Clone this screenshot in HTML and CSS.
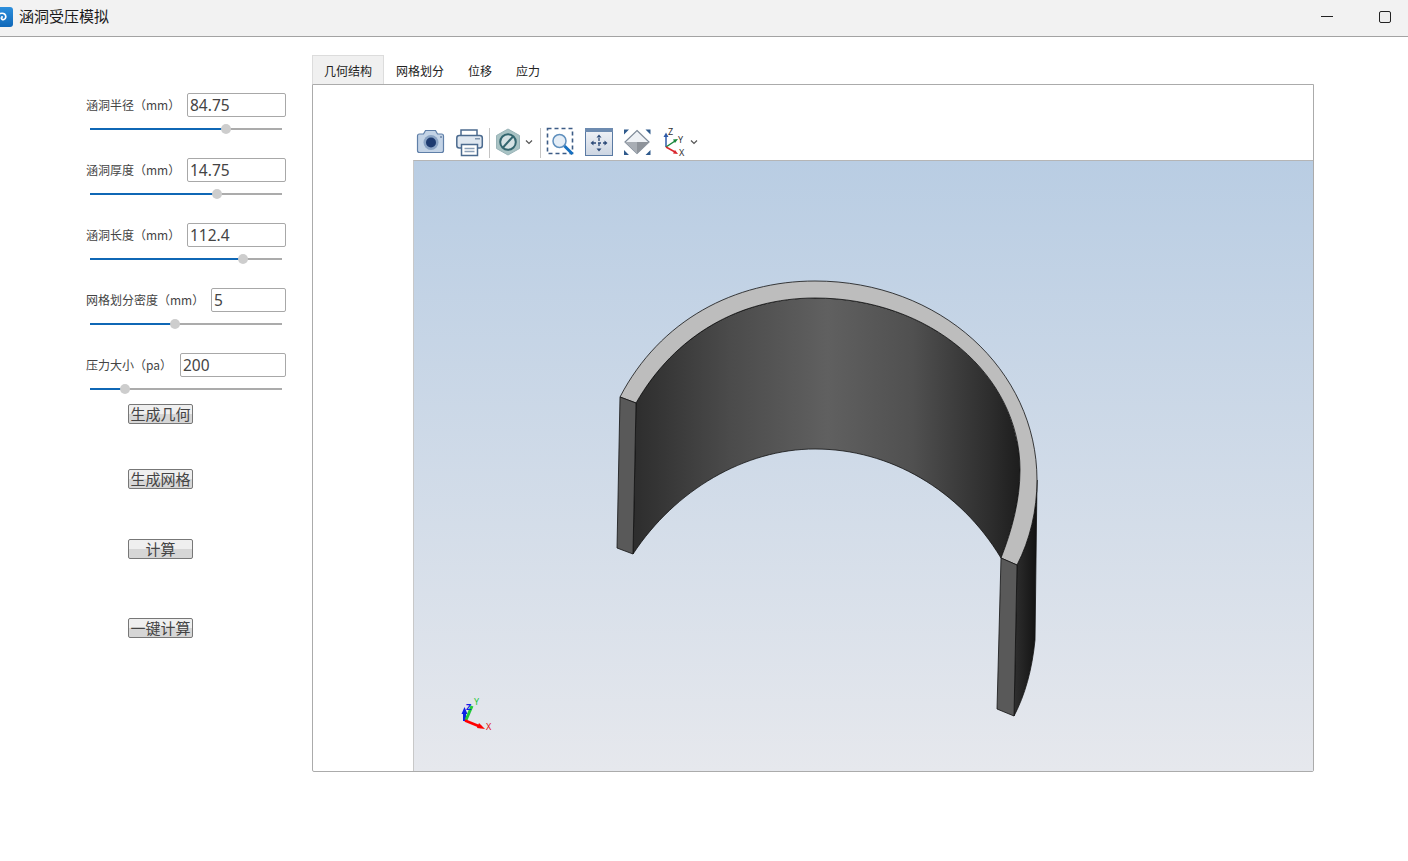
FILE: index.html
```html
<!DOCTYPE html>
<html lang="zh">
<head>
<meta charset="utf-8">
<title>涵洞受压模拟</title>
<link rel="stylesheet" href="styles.css">
</head>
<body>
<header class="titlebar">
  <svg class="app-icon" viewBox="0 0 13 20" width="13" height="20">
    <defs>
      <linearGradient id="appblue" x1="0" y1="0" x2="0" y2="1">
        <stop offset="0" stop-color="#2d8fdc"/>
        <stop offset="1" stop-color="#0f67b8"/>
      </linearGradient>
    </defs>
    <rect x="-7" y="0" width="20" height="20" rx="3" fill="url(#appblue)"/>
    <path d="M0 14c-3.500 0-4.500-3-3.500-5 1.500-2.500 6-3.500 8-2 2 1.500 1.500 5-.5 5.500-1.500.4-3-.5-2.600-2" fill="none" stroke="#fff" stroke-width="1.700"/>
    <circle cx="2" cy="10" r="1" fill="#fff"/>
  </svg>
  <span class="app-title">涵洞受压模拟</span>
  <span class="win-min"></span>
  <span class="win-max"></span>
</header>
<main class="main">
  <aside class="sidebar">
    <div class="field">
      <div class="field-row"><label class="field-label">涵洞半径（mm）</label><input class="field-input w-99" value="84.75"></div>
      <div class="slider"><div class="slider-fill" style="width:136px"></div><div class="slider-knob" style="left:136px"></div></div>
    </div>
    <div class="field">
      <div class="field-row"><label class="field-label">涵洞厚度（mm）</label><input class="field-input w-99" value="14.75"></div>
      <div class="slider"><div class="slider-fill" style="width:127px"></div><div class="slider-knob" style="left:127px"></div></div>
    </div>
    <div class="field">
      <div class="field-row"><label class="field-label">涵洞长度（mm）</label><input class="field-input w-99" value="112.4"></div>
      <div class="slider"><div class="slider-fill" style="width:153px"></div><div class="slider-knob" style="left:153px"></div></div>
    </div>
    <div class="field">
      <div class="field-row"><label class="field-label">网格划分密度（mm）</label><input class="field-input w-75" value="5"></div>
      <div class="slider"><div class="slider-fill" style="width:85px"></div><div class="slider-knob" style="left:85px"></div></div>
    </div>
    <div class="field field-last">
      <div class="field-row"><label class="field-label">压力大小（pa）</label><input class="field-input w-106" value="200"></div>
      <div class="slider"><div class="slider-fill" style="width:35px"></div><div class="slider-knob" style="left:35px"></div></div>
    </div>
    <button class="action a1">生成几何</button>
    <button class="action a2">生成网格</button>
    <button class="action a3">计算</button>
    <button class="action a4">一键计算</button>
  </aside>
  <section class="workspace">
    <nav class="tabs">
      <span class="tab tab-active">几何结构</span>
      <span class="tab">网格划分</span>
      <span class="tab">位移</span>
      <span class="tab">应力</span>
    </nav>
    <div class="pane">
      <div class="pane-inner">
        <div class="toolbar">
          <svg class="tool" viewBox="414 125 36 35" width="36" height="35">
            <path d="M417.500 136q0-2 2-2h4l2-3.500h10l2 3.500h4q2 0 2 2v14.500q0 2-2 2h-22q-2 0-2-2z" fill="#c3d3e6" stroke="#5f7fa8" stroke-width="1.200"/>
            <circle cx="431" cy="142.500" r="7.500" fill="#8aa3c4"/>
            <circle cx="431" cy="142.500" r="5" fill="#1d3a70"/>
            <circle cx="441" cy="137" r="1" fill="#6d85a6"/>
          </svg>
          <svg class="tool" viewBox="450 125 38 35" width="38" height="35">
            <path d="M461 136v-6h16v6" fill="#fff" stroke="#4c6b8f" stroke-width="1.500"/>
            <rect x="456.800" y="135.500" width="25.500" height="12.500" rx="2.500" fill="#dfe7f0" stroke="#4c6b8f" stroke-width="1.500"/>
            <rect x="475" y="138" width="5" height="1.500" fill="#7f95ae"/>
            <path d="M461.500 144.500h16v11h-16z" fill="#fff" stroke="#4c6b8f" stroke-width="1.500"/>
            <path d="M464.500 148.500h10M464.500 151.500h10" stroke="#8ba0b8" stroke-width="1.300"/>
          </svg>
          <span class="tool-sep"></span>
          <svg class="tool" viewBox="490 125 49 35" width="49" height="35">
            <path d="M508 129l11.500 6.500v13L508 155l-11.500-6.500v-13z" fill="#a9c3c4" stroke="#9ab4b8" stroke-width="1"/>
            <circle cx="508" cy="142" r="7.800" fill="#d5e2e4" stroke="#33666f" stroke-width="2"/>
            <path d="M503 147.500l10-11" stroke="#33666f" stroke-width="2"/>
            <path d="M526 140.500l3 3 3-3" fill="none" stroke="#555" stroke-width="1.200"/>
          </svg>
          <span class="tool-sep"></span>
          <svg class="tool" viewBox="541 125 38 35" width="38" height="35">
            <rect x="547.500" y="128.500" width="25" height="25" fill="none" stroke="#3d5c86" stroke-width="1.600" stroke-dasharray="4 3"/>
            <circle cx="559.500" cy="141" r="6.500" fill="#e4edf6" stroke="#5f8fbd" stroke-width="1.500"/>
            <path d="M564.500 146l8 8" stroke="#1570c0" stroke-width="3"/>
          </svg>
          <svg class="tool" viewBox="579 125 39 35" width="39" height="35">
            <defs>
              <linearGradient id="fitbg" x1="0" y1="0" x2="0" y2="1">
                <stop offset="0" stop-color="#f2f4f8"/>
                <stop offset="1" stop-color="#ccd5e2"/>
              </linearGradient>
            </defs>
            <rect x="585.500" y="128.500" width="27" height="27" fill="url(#fitbg)" stroke="#5a7aa3" stroke-width="1"/>
            <rect x="585" y="128" width="28" height="4" fill="#6d8bb0"/>
            <path d="M599 138v10M593 143h12" stroke="#2c4a78" stroke-width="1.300" stroke-dasharray="3 2"/>
            <path d="M599 134.500l-2.500 3h5zM599 151.500l-2.500-3h5zM590.500 143l3-2.500v5zM607.500 143l-3-2.500v5z" fill="#2c4a78"/>
          </svg>
          <svg class="tool" viewBox="618 125 39 35" width="39" height="35">
            <path d="M637 130.500l12 11.500-12 11.500-12-11.500z" fill="#eef1f5" stroke="#7f8b99" stroke-width="1.200"/>
            <path d="M625 142h24l-12 11.500z" fill="#a8adb4"/>
            <path d="M637 142v11.500l12-11.500z" fill="#8e939a"/>
            <path d="M624 129.500l5 0-5 5zM650.500 129.500l-5 0 5 5zM624 155l5 0-5-5zM650.500 155l-5 0 5-5z" fill="#2f5a8c"/>
          </svg>
          <svg class="tool tool-tall" viewBox="657 122 44 38" width="44" height="38">
            <path d="M666 147v-11" stroke="#2f5aa8" stroke-width="1.500"/>
            <path d="M666 132.500l-2.500 4.500h5z" fill="#2f5aa8"/>
            <path d="M666 147l9-6" stroke="#19873c" stroke-width="1.500"/>
            <path d="M678 139l-5 .5 2 3.500z" fill="#19873c"/>
            <path d="M666 147l9 5" stroke="#d9262c" stroke-width="1.500"/>
            <path d="M678 154l-5-.5 2-3.500z" fill="#d9262c"/>
            <text class="axis-text" x="668" y="135">Z</text>
            <text class="axis-text" x="678" y="143">Y</text>
            <text class="axis-text" x="679" y="156">X</text>
            <path d="M691 140.500l3 3 3-3" fill="none" stroke="#555" stroke-width="1.200"/>
          </svg>
        </div>
        <div class="viewer">
          <svg class="scene" viewBox="414 161 899 610" width="899" height="610">
            <defs>
              <linearGradient id="wall" gradientUnits="userSpaceOnUse" x1="633" y1="0" x2="1022" y2="0">
                <stop offset="0" stop-color="#2d2d2d"/>
                <stop offset=".25" stop-color="#4b4b4b"/>
                <stop offset=".5" stop-color="#606060"/>
                <stop offset=".72" stop-color="#505050"/>
                <stop offset=".92" stop-color="#2d2d2d"/>
                <stop offset="1" stop-color="#1c1c1c"/>
              </linearGradient>
              <linearGradient id="outer" gradientUnits="userSpaceOnUse" x1="1014" y1="0" x2="1037" y2="0">
                <stop offset="0" stop-color="#2f2f2f"/>
                <stop offset="1" stop-color="#121212"/>
              </linearGradient>
            </defs>
            <path class="edge" fill="url(#outer)" d="M1037 480L1035 640C1032 670 1025 695 1014 716L1017 565C1030 540 1037 510 1037 480Z"/>
            <path class="edge" fill="url(#wall)" d="M636 403C675 335 740 298 815 298C930 298 1020 375 1020 470C1020 500 1012 530 1001 558C960 490 890 449 815 449C745 449 675 490 633 554Z"/>
            <path class="edge" fill="#bdbdbd" d="M620 397C660 320 735 281 815 281C940 281 1037 370 1037 480C1037 510 1030 540 1017 565L1001 558C1012 530 1020 500 1020 470C1020 375 930 298 815 298C740 298 675 335 636 403Z"/>
            <path class="edge" fill="#595959" d="M620 397L636 403L633 554L617 548Z"/>
            <path class="edge" fill="#595959" d="M1001 558L1017 565L1014 716L997 709Z"/>
            <path d="M464.500 721v-9" stroke="#0b22e6" stroke-width="3"/>
            <path d="M464.500 707l-3 7h6z" fill="#0b22e6"/>
            <path d="M466 720l6-14" stroke="#22c83a" stroke-width="3"/>
            <path d="M465 720.500l16 6.500" stroke="#f00" stroke-width="2.500"/>
            <path d="M485 729l-8-1 2-5z" fill="#f00"/>
            <text class="mini z" x="466" y="710">Z</text>
            <text class="mini y" x="474" y="705">Y</text>
            <text class="mini x" x="486" y="730">X</text>
          </svg>
        </div>
      </div>
    </div>
  </section>
</main>
</body>
</html>
```
FILE: styles.css
```css
* { box-sizing: border-box; }
html, body { margin: 0; padding: 0; }
body {
  width: 1408px;
  height: 861px;
  overflow: hidden;
  background: #fff;
  font-family: "Noto Sans", "Noto Sans CJK SC", sans-serif;
  color: #333;
}
.titlebar {
  height: 37px;
  background: #f2f2f2;
  border-bottom: 1px solid #a3a3a3;
  display: flex;
  align-items: center;
}
.app-icon { flex: none; margin-top: -2px; }
.app-title {
  margin-left: 6px;
  padding-bottom: 6px;
  font-size: 15px;
  color: #1a1a1a;
  font-family: "Noto Sans CJK SC", sans-serif;
}
.win-min {
  margin-left: auto;
  width: 12px;
  height: 1px;
  background: #222;
  margin-top: -4px;
}
.win-max {
  margin-left: 46px;
  margin-right: 17px;
  width: 12px;
  height: 12px;
  border: 1.500px solid #222;
  border-radius: 2px;
  background: #eee;
  margin-top: -2px;
}
.main { display: flex; }
.sidebar {
  width: 312px;
  flex: none;
  padding: 56px 26px 0 86px;
  display: flex;
  flex-direction: column;
}
.field { height: 65px; flex: none; }
.field-last { height: 51px; }
.field-row {
  display: flex;
  align-items: center;
  justify-content: space-between;
  height: 24px;
}
.field-label {
  padding-bottom: 2px;
  font-size: 12px;
  color: #444;
  font-family: "Noto Sans CJK SC", sans-serif;
}
.field-input {
  height: 24px;
  padding: 0 2px 1px;
  border: 1px solid #a8a8a8;
  border-radius: 2px;
  font: 15.500px "Noto Sans", sans-serif;
  color: #444;
  background: #fff;
  outline: none;
}
.w-99 { width: 99px; }
.w-75 { width: 75px; }
.w-106 { width: 106px; }
.slider {
  position: relative;
  margin: 11px 0 0 4px;
  width: 192px;
  height: 2px;
  background: #ababab;
}
.slider-fill { height: 2px; background: #0f67b5; }
.slider-knob {
  position: absolute;
  top: -4px;
  width: 10px;
  height: 10px;
  margin-left: -5px;
  border-radius: 50%;
  background: #cdcdcd;
}
.action {
  flex: none;
  width: 65px;
  height: 20px;
  padding: 0;
  margin-left: 42px;
  border: 1px solid #777;
  border-radius: 2px;
  background: linear-gradient(#efefef 50%, #d6d6d6 50%);
  font: 15px/16px "Noto Sans CJK SC", sans-serif;
  color: #444;
}
.a1 { margin-top: 0; }
.a2 { margin-top: 45px; }
.a3 { margin-top: 50px; }
.a4 { margin-top: 59px; }
.workspace { width: 1002px; flex: none; padding-top: 18px; }
.tabs { display: flex; height: 29px; }
.tab {
  padding: 0 11px;
  font: 12px/29px "Noto Sans CJK SC", sans-serif;
  color: #222;
  border: 1px solid transparent;
  border-bottom: none;
}
.tab-active { background: #f0f0f0; border-color: #dcdcdc; }
.pane {
  height: 688px;
  border: 1px solid #ababab;
  border-radius: 0 0 2px 2px;
}
.pane-inner {
  margin-left: 100px;
  height: 100%;
  display: flex;
  flex-direction: column;
}
.toolbar {
  height: 75px;
  padding: 40px 0 0 1px;
  display: flex;
  align-items: flex-start;
}
.tool { flex: none; display: block; }
.tool-tall { margin-top: -3px; }
.tool-sep {
  flex: none;
  width: 1px;
  height: 30px;
  margin: 3px 0 0 1px;
  background: #c4c4c4;
}
.axis-text {
  font: 9px "Noto Sans", sans-serif;
  fill: #333;
}
.viewer {
  flex: 1;
  border-top: 1px solid #b5b5b5;
  border-left: 1px solid #c8c8c8;
  background: linear-gradient(#b9cde3, #e6e8ed);
  overflow: hidden;
}
.scene { display: block; }
.edge { stroke: #111; stroke-width: .8; }
.mini { font: 9px "Noto Sans", sans-serif; }
.z { fill: #0b22e6; font-weight: 700; }
.y { fill: #22c83a; }
.x { fill: #e01010; }
```
